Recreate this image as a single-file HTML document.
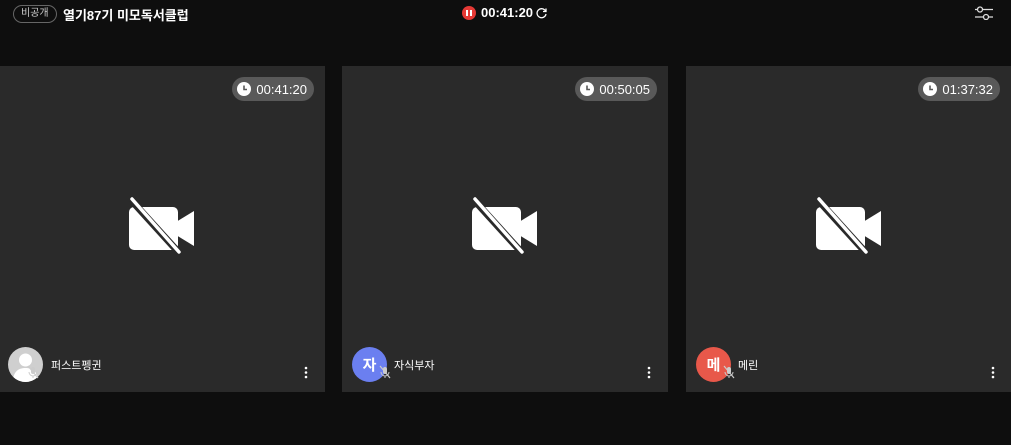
<!DOCTYPE html><html><head><meta charset="utf-8"><style>
body{margin:0;width:1011px;height:445px;background:#0e0e0e;position:relative;overflow:hidden;font-family:"Liberation Sans","Noto Sans CJK KR",sans-serif;color:#fff}
.tile{position:absolute;top:66px;width:326px;height:326px;background:#2a2a2a}
.pill{position:absolute;top:11px;right:11px;height:24px;border-radius:12px;background:#595959;display:flex;align-items:center;padding:0 7px 0 5px;font-size:13px;gap:5px}
.cam{position:absolute;left:130px;top:131px}
.av{position:absolute;left:9px;top:281px;width:35px;height:35px;border-radius:50%;display:flex;align-items:center;justify-content:center;font-size:15px;font-weight:bold}
.mic{position:absolute;left:27px;top:299px}
.nm{position:absolute;left:52px;top:291px;font-size:11px}
.dots{position:absolute;right:17px;top:300px}
</style></head><body>
<div style="position:absolute;left:13px;top:5px;height:16px;border:1px solid #666;border-radius:9px;padding:0 7px;font-size:10px;line-height:16px;color:#ccc">비공개</div>
<div style="position:absolute;left:63px;top:5px;font-size:13px;font-weight:bold">열기87기 미모독서클럽</div>
<div style="position:absolute;left:462px;top:6px;width:14px;height:14px;border-radius:50%;background:#e53935"><div style="position:absolute;left:4px;top:4px;width:2px;height:6px;background:#fff"></div><div style="position:absolute;left:8px;top:4px;width:2px;height:6px;background:#fff"></div></div>
<div style="position:absolute;left:481px;top:5px;font-size:13px;font-weight:bold">00:41:20</div>
<svg style="position:absolute;left:535px;top:7px" width="13" height="13" viewBox="0 0 13 13"><path d="M10.5 4A4.5 4.5 0 1 0 11 7" fill="none" stroke="#fff" stroke-width="1.3"/><path d="M11 1.5V4.5H8" fill="none" stroke="#fff" stroke-width="1.3"/></svg>
<svg style="position:absolute;left:974px;top:6px" width="20" height="14" viewBox="0 0 20 14"><path d="M1 3.5H19M1 11H19" stroke="#ddd" stroke-width="1.3"/><circle cx="6" cy="3.5" r="2.5" fill="#0e0e0e" stroke="#ddd" stroke-width="1.3"/><circle cx="12" cy="11" r="2.5" fill="#0e0e0e" stroke="#ddd" stroke-width="1.3"/></svg>

<div class="tile" style="left:-1px">
<div class="pill"><svg width="14" height="14" viewBox="0 0 14 14"><circle cx="7" cy="7" r="7" fill="#fff"/><path d="M7 3.5V7.5H10" stroke="#595959" stroke-width="1.6" fill="none"/></svg>00:41:20</div>
<svg class="cam" width="66" height="60" viewBox="0 0 66 60"><rect x="0" y="10" width="49" height="43" rx="5" fill="#fff"/><path d="M47 25L65 14V49L47 38Z" fill="#fff"/><path d="M2 3L52 58" stroke="#2a2a2a" stroke-width="7"/><path d="M3 2L50 55" stroke="#fff" stroke-width="3.5" stroke-linecap="round"/></svg>
<div class="av" style="background:#cfcfcf;overflow:hidden"><svg width="35" height="35" viewBox="0 0 35 35"><circle cx="17.5" cy="13" r="6.5" fill="#fff"/><path d="M5 35C5 24 11 21 17.5 21S30 24 30 35Z" fill="#fff"/></svg></div>
<svg class="mic" width="14" height="14" viewBox="0 0 14 14"><rect x="5" y="2" width="4" height="7" rx="2" fill="#ccc"/><path d="M3 7A4 4 0 0 0 11 7M7 11V13" stroke="#ccc" fill="none"/><path d="M2 1L12 13" stroke="#ccc" stroke-width="1.2"/></svg>
<div class="nm">퍼스트펭귄</div>
<svg class="dots" width="4" height="13"><circle cx="2" cy="2" r="1.3" fill="#fff"/><circle cx="2" cy="6.5" r="1.3" fill="#fff"/><circle cx="2" cy="11" r="1.3" fill="#fff"/></svg>
</div>

<div class="tile" style="left:342px">
<div class="pill"><svg width="14" height="14" viewBox="0 0 14 14"><circle cx="7" cy="7" r="7" fill="#fff"/><path d="M7 3.5V7.5H10" stroke="#595959" stroke-width="1.6" fill="none"/></svg>00:50:05</div>
<svg class="cam" width="66" height="60" viewBox="0 0 66 60"><rect x="0" y="10" width="49" height="43" rx="5" fill="#fff"/><path d="M47 25L65 14V49L47 38Z" fill="#fff"/><path d="M2 3L52 58" stroke="#2a2a2a" stroke-width="7"/><path d="M3 2L50 55" stroke="#fff" stroke-width="3.5" stroke-linecap="round"/></svg>
<div class="av" style="background:#6b7ff0;left:10px">자</div>
<svg class="mic" width="14" height="14" viewBox="0 0 14 14" style="left:36px"><rect x="5" y="2" width="4" height="7" rx="2" fill="#ccc"/><path d="M3 7A4 4 0 0 0 11 7M7 11V13" stroke="#ccc" fill="none"/><path d="M2 1L12 13" stroke="#ccc" stroke-width="1.2"/></svg>
<div class="nm">자식부자</div>
<svg class="dots" width="4" height="13"><circle cx="2" cy="2" r="1.3" fill="#fff"/><circle cx="2" cy="6.5" r="1.3" fill="#fff"/><circle cx="2" cy="11" r="1.3" fill="#fff"/></svg>
</div>

<div class="tile" style="left:686px;width:325px">
<div class="pill"><svg width="14" height="14" viewBox="0 0 14 14"><circle cx="7" cy="7" r="7" fill="#fff"/><path d="M7 3.5V7.5H10" stroke="#595959" stroke-width="1.6" fill="none"/></svg>01:37:32</div>
<svg class="cam" width="66" height="60" viewBox="0 0 66 60"><rect x="0" y="10" width="49" height="43" rx="5" fill="#fff"/><path d="M47 25L65 14V49L47 38Z" fill="#fff"/><path d="M2 3L52 58" stroke="#2a2a2a" stroke-width="7"/><path d="M3 2L50 55" stroke="#fff" stroke-width="3.5" stroke-linecap="round"/></svg>
<div class="av" style="background:#e8584a;left:10px">메</div>
<svg class="mic" width="14" height="14" viewBox="0 0 14 14" style="left:36px"><rect x="5" y="2" width="4" height="7" rx="2" fill="#ccc"/><path d="M3 7A4 4 0 0 0 11 7M7 11V13" stroke="#ccc" fill="none"/><path d="M2 1L12 13" stroke="#ccc" stroke-width="1.2"/></svg>
<div class="nm">메린</div>
<svg class="dots" width="4" height="13" style="right:16px"><circle cx="2" cy="2" r="1.3" fill="#fff"/><circle cx="2" cy="6.5" r="1.3" fill="#fff"/><circle cx="2" cy="11" r="1.3" fill="#fff"/></svg>
</div>
</body></html>
